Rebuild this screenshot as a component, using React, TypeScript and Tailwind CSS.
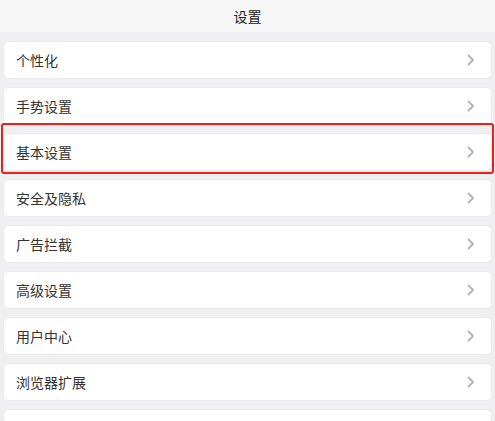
import React from "react";

const items = [
  "个性化",
  "手势设置",
  "基本设置",
  "安全及隐私",
  "广告拦截",
  "高级设置",
  "用户中心",
  "浏览器扩展",
  "",
];

const Chevron = () => (
  <svg width="8" height="12" viewBox="0 0 8 12" fill="none">
    <path d="M1.5 1.5 L6 6 L1.5 10.5" stroke="#b3b3b3" strokeWidth="1.8" strokeLinecap="round" strokeLinejoin="round" />
  </svg>
);

const App = () => {
  return (
    <div
      className="w-[495px] h-[421px] overflow-hidden bg-[#efeff2] text-[#333333]"
      style={{ fontFamily: '"Noto Sans CJK SC", "Liberation Sans", sans-serif' }}
    >
      <div className="h-[32px] bg-[#f7f7f7] flex items-center justify-center text-[14px] text-[#222]">
        设置
      </div>
      <div className="flex flex-col gap-[10px] pt-[10px] px-[4px]">
        {items.map((name, index) => (
          <div key={index} className="relative">
            <div className="h-[36px] bg-white rounded-[4px] shadow-[0_0_1px_rgba(0,0,0,0.15)] flex items-center justify-between pl-[12px] pr-[16px]">
              <span className="text-[14px] leading-none">{name}</span>
              {name && <Chevron />}
            </div>
            {index === 2 && (
              <div className="absolute -top-[11px] -bottom-[4px] -left-[3px] -right-[3px] border-2 border-[#ee1f1a] rounded-[3px]" />
            )}
          </div>
        ))}
      </div>
    </div>
  );
};

export default App;
